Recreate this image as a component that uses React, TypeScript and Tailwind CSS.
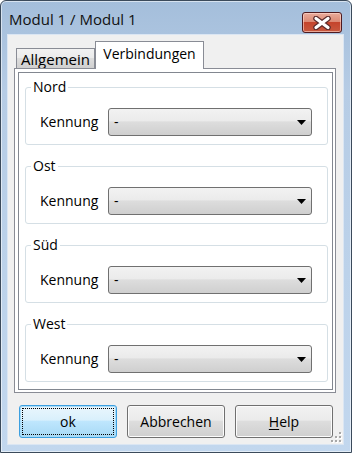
import React from "react";

const font = { fontFamily: '"Open Sans", "Noto Sans", "Liberation Sans", sans-serif' };

function Combo() {
  return (
    <div className="relative h-[28px] w-[204px] rounded-[3px] border border-[#707070] bg-[linear-gradient(to_bottom,#f2f2f2_0%,#ebebeb_45%,#dddddd_50%,#cfcfcf_100%)]">
      <span className="absolute left-[5px] top-[3px] text-[14px] leading-[20px] text-black">-</span>
      <svg className="absolute right-[5px] top-[11px]" width="9" height="5" viewBox="0 0 9 5">
        <path d="M0 0 H9 L4.5 5 Z" fill="#000" />
      </svg>
    </div>
  );
}

function Group({ label, first }: { label: string; first?: boolean }) {
  return (
    <div
      className={`relative rounded-[3px] border border-[#d5dfe5] pt-[20px] pb-[8px] pl-[14px] ${first ? "mt-[14px]" : "mt-[21px]"}`}
    >
      <span className="absolute left-[5px] top-[-11px] bg-white px-[2px] text-[14px] leading-[20px] text-black">
        {label}
      </span>
      <div className="flex items-center">
        <span className="w-[68px] text-[14px] leading-[20px] text-black">Kennung</span>
        <Combo />
      </div>
    </div>
  );
}

function Btn({ children, focus }: { children: React.ReactNode; focus?: boolean }) {
  if (focus) {
    return (
      <div className="relative flex h-[33px] w-[98px] items-center justify-center rounded-[3px] border border-[#3c9fe0] bg-[linear-gradient(to_bottom,#eaf6fd_0%,#d9f0fc_45%,#bee6fd_50%,#a7d9f5_100%)] shadow-[inset_0_0_0_1px_#a9dcf7]">
        <div className="absolute inset-[2px] border border-dotted border-black" />
        <span className="text-[14px] leading-[20px] text-black">{children}</span>
      </div>
    );
  }
  return (
    <div className="flex h-[33px] w-[98px] items-center justify-center rounded-[3px] border border-[#707070] bg-[linear-gradient(to_bottom,#f2f2f2_0%,#ebebeb_45%,#dddddd_50%,#cfcfcf_100%)] shadow-[inset_0_0_0_1px_#fcfcfc]">
      <span className="text-[14px] leading-[20px] text-black">{children}</span>
    </div>
  );
}

export default function App() {
  return (
    <div className="h-[453px] w-[352px] bg-white" style={font}>
      <div className="flex h-[453px] w-[352px] flex-col rounded-t-[6px] border border-[#3b4a5b] bg-[linear-gradient(to_bottom,#a4bedb_0%,#b6cce5_20%,#bcd2ea_60%,#c2d7ee_100%)] shadow-[inset_0_0_0_1px_rgba(255,255,255,0.55)]">
        {/* title bar */}
        <div className="flex h-[34px] items-start justify-between pl-[8px] pr-[9px]">
          <span className="mt-[7px] text-[15px] leading-[22px] text-[#111]">Modul 1 / Modul 1</span>
          <div className="mt-[11px] flex h-[21px] w-[40px] items-center justify-center rounded-[3px] border border-[#4e1b20] bg-[linear-gradient(to_bottom,#e9ab9b_0%,#dc8a75_45%,#c5442c_50%,#c8593f_100%)] shadow-[inset_0_0_0_1px_rgba(255,220,210,0.6)]">
            <svg width="20" height="14" viewBox="0 0 20 14">
              <path d="M4 2.5 L16 11.5 M16 2.5 L4 11.5" stroke="#5a2a2a" strokeWidth="5.5" strokeLinecap="round" />
              <path d="M4 2.5 L16 11.5 M16 2.5 L4 11.5" stroke="#ffffff" strokeWidth="3.2" strokeLinecap="round" />
            </svg>
          </div>
        </div>
        {/* client */}
        <div className="relative ml-[7px] mr-[8px] flex h-[409px] flex-col bg-[#f0f0f0] pl-[6px] pr-[7px] pt-[6px] shadow-[0_0_0_1px_#dbe6f3]">
          {/* tab strip */}
          <div className="flex h-[27px] items-end pl-[2px]">
            <div className="flex h-[20px] w-[79px] items-center justify-center border border-b-0 border-[#898c95] bg-[linear-gradient(to_bottom,#f2f2f2_0%,#ebebeb_45%,#dddddd_50%,#cfcfcf_100%)]">
              <span className="text-[15px] leading-[18px] text-black">Allgemein</span>
            </div>
            <div className="relative z-10 -mb-px flex h-[28px] w-[109px] items-start justify-center border border-b-0 border-[#898c95] bg-white pt-[3px]">
              <span className="text-[14px] leading-[18px] text-black">Verbindungen</span>
            </div>
          </div>
          {/* panel */}
          <div className="h-[325px] border border-[#898c95] bg-white pb-[2px] pl-[3px] pr-[2px] pt-[3px]">
            <div className="h-[318px] border border-[#828790] pl-[6px] pr-[4px]">
              <Group label="Nord" first />
              <Group label="Ost" />
              <Group label="Süd" />
              <Group label="West" />
            </div>
          </div>
          {/* buttons */}
          <div className="mt-[12px] flex gap-[10px] pl-[5px]">
            <Btn focus>ok</Btn>
            <Btn>Abbrechen</Btn>
            <Btn>
              <span className="underline underline-offset-[2px]">H</span>elp
            </Btn>
          </div>
          {/* resize grip */}
          <svg className="absolute bottom-[1px] right-[1px]" width="12" height="12" viewBox="0 0 12 12">
            {[
              [9, 1],
              [5, 5],
              [9, 5],
              [1, 9],
              [5, 9],
              [9, 9],
            ].map(([x, y], i) => (
              <g key={i}>
                <rect x={x + 1} y={y + 1} width="2" height="2" fill="#ffffff" />
                <rect x={x} y={y} width="2" height="2" fill="#a7a7a7" />
              </g>
            ))}
          </svg>
        </div>
      </div>
    </div>
  );
}
